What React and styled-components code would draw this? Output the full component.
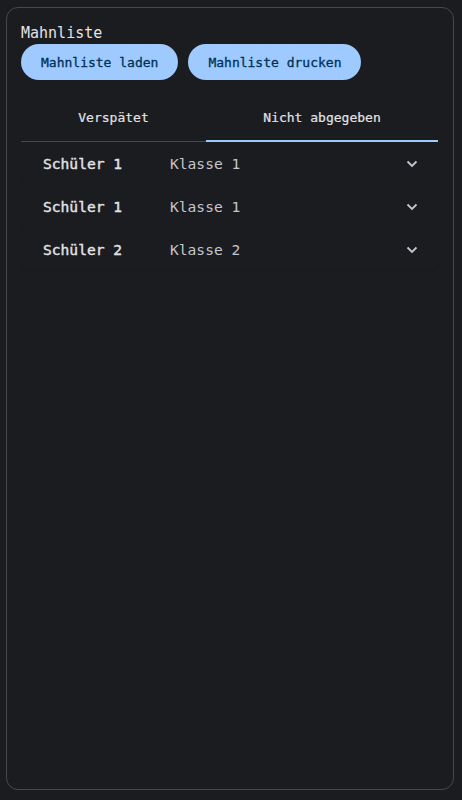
import React, { useState } from "react";
import styled, { createGlobalStyle } from "styled-components";

const GlobalStyle = createGlobalStyle`
  html, body {
    margin: 0;
    background: #1b1c1f;
  }
  body {
    padding: 7px 8px 10px 6px;
    font-family: "DejaVu Sans Mono", "Liberation Mono", monospace;
    color: #e3e2e6;
  }
`;

const Card = styled.div`
  box-sizing: border-box;
  height: 783px;
  border: 1px solid #47484d;
  border-radius: 12px;
  padding: 14px 15px 14px 14px;
  display: flex;
  flex-direction: column;
`;

const Title = styled.div`
  font-size: 15px;
  line-height: 22px;
  color: #e3e2e6;
`;

const ButtonRow = styled.div`
  display: flex;
  gap: 10px;
`;

// medium weight is faked with a thin stroke, the mono font has no 500
const PillButton = styled.button`
  height: 36px;
  padding: 0 20px;
  border: none;
  border-radius: 18px;
  background: #9ecaff;
  color: #003258;
  font-family: inherit;
  font-size: 13px;
  -webkit-text-stroke: 0.3px #003258;
  cursor: pointer;
`;

const Tabs = styled.div`
  display: flex;
  margin-top: 14px;
  border-bottom: 1px solid #45464b;
`;

const Tab = styled.div`
  flex: 1 1 auto;
  height: 47px;
  display: flex;
  align-items: center;
  justify-content: center;
  font-size: 13px;
  color: #e3e2e6;
  -webkit-text-stroke: 0.2px #e3e2e6;
  position: relative;
  cursor: pointer;

  &::after {
    content: "";
    position: absolute;
    left: 0;
    right: 0;
    bottom: -1px;
    height: 2px;
    background: ${(p) => (p.$active ? "#9ecaff" : "transparent")};
  }
`;

const List = styled.div`
  display: flex;
  flex-direction: column;
`;

const Row = styled.div`
  height: 43px;
  display: flex;
  align-items: center;
  padding: 0 19px 0 22px;
  border-radius: 0 0 8px 8px;
  background: #1b1c1f;
  box-shadow: 0 1px 2px -1px rgba(0, 0, 0, 0.25);
  font-size: 14.6px;
`;

const Name = styled.span`
  width: 127px;
  color: #e3e2e6;
  -webkit-text-stroke: 0.4px #e3e2e6;
`;

const ClassName = styled.span`
  flex: 1;
  color: #c6c6cc;
`;

const Chevron = () => (
  <svg width="14" height="14" viewBox="0 0 14 14">
    <path d="M2.5 4.5 L7 9 L11.5 4.5" fill="none" stroke="#c4c6cf" strokeWidth="1.8" />
  </svg>
);

const students = [
  { name: "Schüler 1", klasse: "Klasse 1" },
  { name: "Schüler 1", klasse: "Klasse 1" },
  { name: "Schüler 2", klasse: "Klasse 2" },
];

export default function App() {
  const [tab, setTab] = useState(1);
  return (
    <>
      <GlobalStyle />
      <Card>
        <Title>Mahnliste</Title>
        <ButtonRow>
          <PillButton>Mahnliste laden</PillButton>
          <PillButton>Mahnliste drucken</PillButton>
        </ButtonRow>
        <Tabs>
          <Tab $active={tab === 0} onClick={() => setTab(0)}>Verspätet</Tab>
          <Tab $active={tab === 1} onClick={() => setTab(1)}>Nicht abgegeben</Tab>
        </Tabs>
        <List>
          {students.map((s, i) => (
            <Row key={i}>
              <Name>{s.name}</Name>
              <ClassName>{s.klasse}</ClassName>
              <Chevron />
            </Row>
          ))}
        </List>
      </Card>
    </>
  );
}
